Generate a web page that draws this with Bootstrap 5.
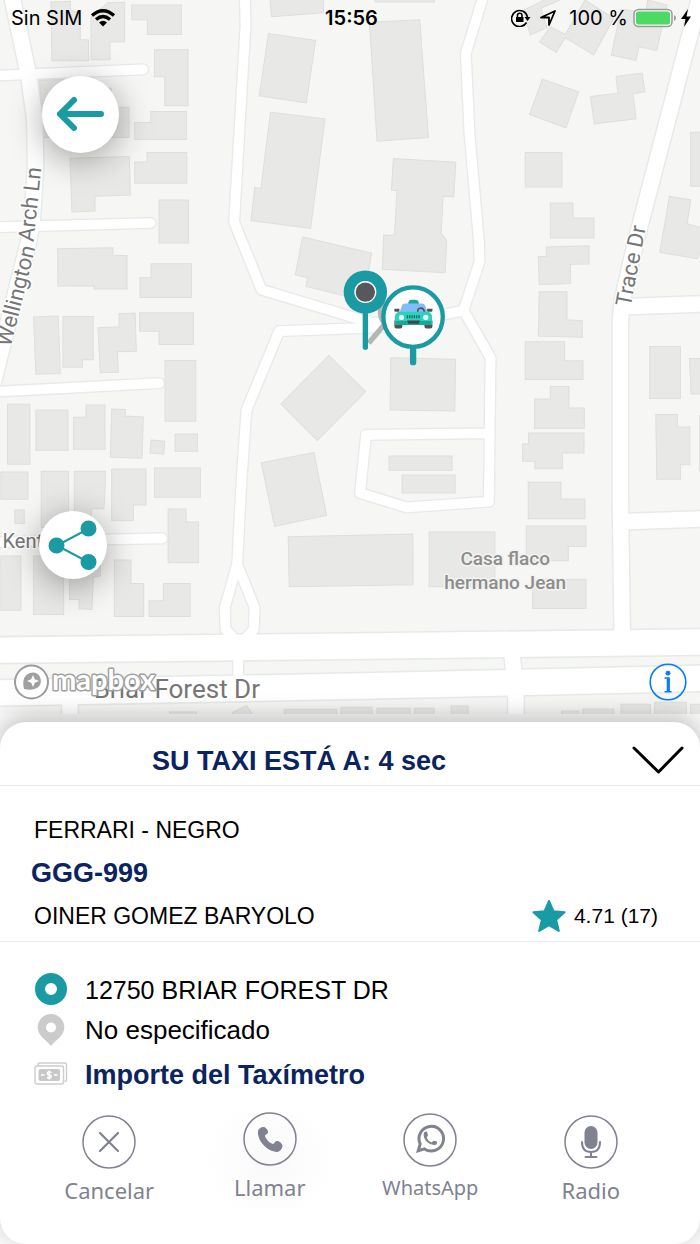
<!DOCTYPE html>
<html lang="es">
<head>
<meta charset="utf-8">
<meta name="viewport" content="width=device-width, initial-scale=1">
<title>Su taxi</title>
<link href="https://cdn.jsdelivr.net/npm/bootstrap@5.3.0/dist/css/bootstrap.min.css" rel="stylesheet">
<script src="https://cdn.jsdelivr.net/npm/bootstrap@5.3.0/dist/js/bootstrap.bundle.min.js" defer></script>
<style>
  :root { --teal: #1a9ba3; --navy: #0b245e; --slate: #808290; }
  body { font-family: "Liberation Sans", Arial, sans-serif; color: #000; background: #fafafa; }
  button { font: inherit; }

  /* Map */
  .map-area { background: #f6f6f4; min-height: 480px; }
  .map-canvas { position: absolute; inset: 0; }
  .map-canvas text { font-family: Roboto, sans-serif; fill: #767676; stroke: #fff; stroke-width: 3px; paint-order: stroke; stroke-linejoin: round; }
  .map-canvas .place { fill: #8d8d8d; stroke: #f3f3f1; font-weight: 500; font-size: 19px; text-anchor: middle; }
  .street { font-size: 22px; }
  .avenue { font-size: 26px; }
  .buildings { fill: #e8e8e6; stroke: #dededc; stroke-width: 3; }
  .roads { fill: none; stroke-linecap: round; stroke-linejoin: round; }
  .casing { stroke: #e6ebe9; }
  .surface { stroke: #fff; }

  .status-bar { font-family: Inter, sans-serif; font-size: 20px; line-height: 24px; padding: 6px 8px 6px 11px; }
  .status-bar > * { flex: 1 1 0; }
  .clock { font-weight: 600; }

  .round-btn { position: absolute; border: 0; padding: 0; border-radius: 50%; background: #fff; box-shadow: 0 6px 34px rgba(0,0,0,.36); }
  .back-btn { left: 42px; top: 76px; width: 77px; height: 77px; }
  .share-btn { left: 39px; bottom: 135px; width: 68px; height: 68px; }
  .map-logo { position: absolute; left: 13px; bottom: 10px; }
  .info-btn { position: absolute; right: 13px; bottom: 13px; border: 0; padding: 0; background: none; }

  /* Trip sheet */
  .sheet { margin-top: 8px; border-radius: 26px; background: #fff; box-shadow: 0 -6px 22px rgba(0,0,0,.22); padding-bottom: 36px; }
  .sheet-head { height: 64px; padding: 14px 16px 0; border-bottom: 1px solid #ececec; }
  .sheet-title { font-size: 27px; line-height: 50px; font-weight: 700; color: var(--navy); margin-right: 50px; }
  .toggle-btn { border: 0; background: none; padding: 0; width: 52px; }
  .accent { color: var(--navy); font-weight: 700; }
  .driver { padding: 23px 42px 4px 34px; border-bottom: 1px solid #ececec; font-size: 23px; line-height: 42px; }
  .plate { font-size: 27px; line-height: 44px; margin-left: -3px; }
  .rating { font-size: 21px; }
  .trip { padding: 28px 34px 0; font-size: 26px; line-height: 40px; }
  .trip li { gap: 17px; }
  .trip svg { flex: none; }
  .address { font-size: 25px; }
  .fare { font-size: 27px; line-height: 50px; }
  .actions { padding: 12px 29px 0; }
  .action { border: 0; background: none; padding: 0; color: var(--slate); font-family: "Noto Sans", sans-serif; font-size: 22px; line-height: 30px; }
  .action svg { display: block; margin: 0 auto 6px; }
  .action-sm { font-size: 20px; }
  .raised { padding-bottom: 5px; }
  .glow { background: radial-gradient(circle, #f9f9fa 0, #fff 70%); }
</style>
</head>
<body>
<div class="d-flex flex-column min-vh-100">

  <main class="map-area position-relative flex-grow-1">
    <svg class="map-canvas w-100 h-100" viewBox="0 0 700 713" preserveAspectRatio="xMidYMax slice" role="img" aria-label="Mapa">
      <defs>
        <g id="lanes">
          <path d="M-20 227L430 208M-20 681L452 668M-20 1174L478 1148M-20 1626L120 1620L487 1613"/>
          <path d="M735-20L737 75L703 665L785 868L1110 966L1200 970L1390 930"/>
          <path d="M1452-20L1397 160L1408 400L1436 720L1438 785L1390 930L1471 1072L1466 1503L1220 1520L1080 1477L1098 1303L1468 1298"/>
          <path d="M1160 980L838 992L740 1228L725 1440L712 1690L675 1820L677 1885L710 1920M712 1690L764 1820L762 1885L730 1920M715 1940V2060"/>
        </g>
        <g id="streets">
          <path d="M35-20L88 230L106 360L108 500L98 660L88 720L-20 1150"/>
          <path d="M2101-20L1907 720L1866 900L1860 960V1500L1866 1930M1866 919L2120 910M1862 1563L2120 1554"/>
          <path d="M1533 1940L1545 2050M211 2080V2180M1547 2070V2180"/>
        </g>
        <g id="avenues"><path d="M-20 1948L1050 1936L2120 1923M-20 2076L1050 2056L2120 2032"/></g>
      </defs>
      <g transform="scale(.33333)">
        <g class="buildings">
          <path d="M154 6L212 4V30L242 40V118L267 120V182H157ZM274 50L325 8L375 7V125L331 126V179H274ZM396 15H545V103H443V59H396ZM464 149H565V317H495V230H464ZM453 334H560V418H405V367H453ZM442 457H561V549H405V485H442ZM478 599H566V728H478ZM211 474L389 469L392 584L286 588V632L217 635ZM120 240L200 238L335 265V321H388V412H130ZM806 100L947 121L919 308L778 287ZM812 336L975 356L932 684L753 661L765 562L783 564ZM810-10H970V38L815 50Z"/>
          <g transform="translate(1050)">
            <path d="M75-10H253V6H75ZM58 67L209 59L235 412L81 423ZM130 475L317 486L311 590L279 588L273 700L290 720L285 817L97 807L101 704L133 705L141 571L124 570ZM576 237L685 275L647 383L538 343ZM797 229L875 219L884 275L848 281L857 356L732 371L720 289L803 279ZM525 457H635V560H525ZM600 608H668V653H731V713H600ZM520 30L567 8L590-5H640L572 25L590 82L540 105ZM600 80L645 103L704 0L790 55L730 165L645 113L618 157L568 126ZM812 28L885 38L892 0L950 15L919 151L866 140L857 181L783 165ZM1020 396H1080V558H1020ZM957 588L1021 599L1010 670L1080 690L1040 775L928 756Z"/>
          </g>
          <g transform="translate(0 720)">
            <path d="M174 25L340 22V44L382 46V146H283V136L175 137ZM454 70H575V171H421V112H454ZM102 230L176 227L182 399L109 401ZM190 228H281V358H248V380H190ZM295 262L358 259V220L406 218L410 332L353 334L356 395L302 397ZM420 217H581V312H478V272H420ZM496 360H588V542H496ZM24 491H91V671H24ZM109 508H205V629H109ZM222 530H259V493H316V626H222ZM336 505L377 507V526L431 529L427 653L332 650ZM454 598L495 602L492 641L451 637ZM526 580H593V632H526ZM908-10L1115 38L1090 180L918 138L923 112L886 103ZM987 345L1097 453L952 600L843 490ZM784 666L942 636L980 824L824 857ZM4 694H85V776H4ZM125 692H207V860H125ZM224 692H317V735L313 804H275V860H224ZM336 685H439V793H401V840H336ZM464 682H602V770H464Z"/>
          </g>
          <g transform="translate(1050 720)">
            <path d="M588 20L716 16V71L660 72V129L567 132L564 49L588 48ZM567 154H650V238L696 241V290L564 287ZM525 304H643V361H698V417H525ZM553 475H600V438H656V502H702V563H553ZM535 577H701V637H636V684H554V662H517V610H535ZM122 352L316 356L314 511L120 508ZM117 646H306V689H117ZM156 703H315V757H156ZM898 318H990V474H898ZM1017 354H1080V460H1022ZM916 522H981V559H1018V672H990V716H919ZM1048 525H1080V692H1048Z"/>
          </g>
          <g transform="translate(0 1440)">
            <path d="M46 88H74V128H46ZM505 85H559V124H596V246H505ZM4 226H64V388H4ZM102 226H192V401H102ZM210 240H302V285L281 290L277 386L238 384V356H210ZM344 238H394V308H432V407H344ZM491 308H571V407H448V360H491ZM865 168L1238 160L1239 312L868 318Z"/>
          </g>
          <g transform="translate(1050 1440)">
            <path d="M534 5H632V55H704V114H534ZM528 136H707V197H654V240H528ZM547 295H707V383H547ZM237 154H434V318H237Z"/>
          </g>
        </g>
        <g class="roads">
          <g class="casing"><use href="#lanes" stroke-width="37"/><use href="#streets" stroke-width="55"/><use href="#avenues" stroke-width="86"/></g>
          <g class="surface"><use href="#lanes" stroke-width="29"/><use href="#streets" stroke-width="46"/><use href="#avenues" stroke-width="76"/></g>
        </g>
        <path class="buildings" d="M510 2133H590V2150H510ZM697 2135L740 2113L765 2150H700ZM853 2125H1010V2150H853ZM1023 2119H1116V2150H1023ZM1131 2122H1230V2150H1131ZM1243 2122H1302V2150H1243ZM1353 2115H1404V2150H1353ZM1684 2130H1736V2150H1684ZM1747 2124H1840V2150H1747ZM1862 2110H1950V2150H1862ZM1963 2104H2058V2150H1963ZM2070 2110H2120V2150H2070Z"/>
      </g>
      <text class="street" transform="translate(11 347) rotate(-76)">Wellington</text>
      <text class="street" transform="translate(34 242) rotate(-84)">Arch Ln</text>
      <text class="street" transform="translate(630 307) rotate(-79)">Trace Dr</text>
      <text x="3" y="547" font-size="20">Kent</text>
      <text class="avenue" x="94" y="697">Briar Forest Dr</text>
      <text class="place" x="505" y="564">Casa flaco</text>
      <text class="place" x="505" y="588">hermano Jean</text>

      <!-- pickup pin and taxi pin -->
      <g transform="translate(330 260) scale(.33333)">
        <path d="M116 248L165 190Q140 160 162 120" fill="none" stroke="#b5b5b5" stroke-width="16"/>
        <path d="M106 140V260" stroke="#1a9ba3" stroke-width="16" stroke-linecap="round"/>
        <circle cx="106" cy="95" r="65" fill="#1a9ba3"/>
        <circle cx="106" cy="95" r="31" fill="#58585c" stroke="#fff" stroke-width="4"/>
        <path d="M249 250V305" stroke="#1a9ba3" stroke-width="19" stroke-linecap="round"/>
        <circle cx="249" cy="170" r="89" fill="#fff" stroke="#1a9ba3" stroke-width="13"/>
        <path d="M234 131Q235 118 244 118H256Q265 118 267 131Z" fill="#18a999"/>
        <path d="M193 180H217V198Q217 204 211 204H199Q193 204 193 198ZM283 180H307V198Q307 204 301 204H289Q283 204 283 198ZM193 145H208V154H196Q193 154 193 151ZM291 145H307V151Q307 154 304 154H291Z" fill="#525257"/>
        <path d="M208 156L217 133Q219 129 226 129H276Q282 129 284 134L293 156Z" fill="#82bdfa"/>
        <path d="M206 154H294Q306 157 306 171V187Q306 194 298 194H202Q194 194 194 187V171Q195 157 206 154Z" fill="#2bd1bd"/>
        <path d="M196 182H304V188Q304 194 298 194H202Q196 194 196 188Z" fill="#16a898"/>
        <path d="M263 154V149Q265 143 272 143Q281 143 283 154" fill="none" stroke="#525257" stroke-width="5"/>
        <path d="M230 169H272" stroke="#0e6f69" stroke-width="9" stroke-dasharray="4 3"/>
        <path d="M231 180H270L266 190H235Z" fill="#444449"/>
        <circle cx="214" cy="171" r="8" fill="#e5fbf6"/><circle cx="287" cy="171" r="8" fill="#e5fbf6"/>
      </g>
    </svg>

    <header class="status-bar position-relative d-flex align-items-center">
      <div class="d-flex align-items-center gap-2">
        <span>Sin SIM</span>
        <svg width="26" height="18" viewBox="0 0 24 18" fill="none" stroke="#000" stroke-width="3.200" aria-label="Wi-Fi"><path d="M1 6.500Q12-3 23 6.500M5 10.500Q12 4.500 19 10.500"/><path d="M8 13.500Q12 10 16 13.500L12 17.500Z" fill="#000" stroke="none"/></svg>
      </div>
      <div class="clock text-center">15:56</div>
      <div class="d-flex align-items-center justify-content-end">
        <svg width="20" height="18" viewBox="0 0 20 18" fill="none" stroke="#000" stroke-width="1.600" aria-hidden="true"><path d="M15.500 13.500A8 8 0 1 1 16.400 8"/><path d="M13.500 8H19.500L16.500 12Z" fill="#000" stroke="none"/><path d="M5 8H12.500V13H5Z" fill="#000" stroke="none"/><path d="M6.500 8V6.200Q6.500 4.200 8.700 4.200T11 6.200V8"/></svg>
        <svg class="mx-2" width="18" height="18" viewBox="0 0 18 18" fill="none" stroke="#000" stroke-width="1.800" stroke-linejoin="round" aria-hidden="true"><path d="M16 2L10 16V8.500H2Z"/></svg>
        <span class="ms-1 text-nowrap">100 %</span>
        <svg class="ms-1" width="60" height="20" viewBox="0 0 60 20" aria-label="Batería"><rect x="2" y="1.500" width="38" height="17" rx="4.500" fill="#f6f6f4" stroke="#9a9a9a" stroke-width="1.500"/><rect x="4" y="3.500" width="34" height="13" rx="2.500" fill="#4cd964"/><path d="M42 7V13Q44 12 44 10T42 7Z" fill="#9a9a9a"/><path d="M56 1L49 11H53.500L52 19L59 8.500H54.500Z"/></svg>
      </div>
    </header>

    <button type="button" class="round-btn back-btn" aria-label="Volver">
      <svg class="d-block" width="77" height="77" viewBox="0 0 77 77" fill="none" stroke="#1a9ba3" stroke-width="6" stroke-linecap="round" stroke-linejoin="round"><path d="M59 38H18M32 24L18 38L32 52"/></svg>
    </button>
    <button type="button" class="round-btn share-btn" aria-label="Compartir">
      <svg class="d-block" width="68" height="68" viewBox="0 0 68 68" fill="#1a9ba3" stroke="#1a9ba3" stroke-width="2"><path d="M50 17.500L18 34.500L50 51.500" fill="none"/><circle cx="49.500" cy="17.500" r="7"/><circle cx="17.500" cy="34.500" r="7"/><circle cx="49.500" cy="51" r="7"/></svg>
    </button>
    <a href="#" class="map-logo" aria-label="mapbox">
      <svg class="d-block" width="150" height="44" viewBox="0 0 150 44"><circle cx="18.500" cy="22" r="16.500" fill="#fff" stroke="#9c9c9c" stroke-width="2"/><path d="M11 29Q8 16 17 13Q24 11 27 17Q30 24 24 28Q19 31 11 29Z" fill="#a0a0a0"/><path d="M20 15L21.800 19.200L26 21L21.800 22.800L20 27L18.200 22.800L14 21L18.200 19.200Z" fill="#fff"/><text x="39" y="30" font-family="Lato, sans-serif" font-size="29" font-weight="700" fill="#fff" stroke="#a0a0a0" stroke-width="3" stroke-linejoin="round" paint-order="stroke">mapbox</text></svg>
    </a>
    <button type="button" class="info-btn" aria-label="Información">
      <svg class="d-block" width="38" height="38" viewBox="0 0 38 38" fill="none" stroke="#087cff" stroke-width="1.600"><circle cx="19" cy="19" r="17.800"/><path d="M15.500 15H20V28.500M15.500 28.800H22.500" stroke-width="1.400"/><path d="M19.200 15V28.500" stroke-width="3"/><circle cx="19" cy="10.200" r="2.400" fill="#087cff" stroke="none"/></svg>
    </button>
  </main>

  <section class="sheet position-relative">
    <div class="sheet-head d-flex">
      <h1 class="sheet-title flex-grow-1 text-center mb-0">SU TAXI ESTÁ A: 4 sec</h1>
      <button type="button" class="toggle-btn" aria-label="Ocultar detalles"><svg class="d-block" width="52" height="30" viewBox="0 0 52 30" fill="none" stroke="#000" stroke-width="3" stroke-linecap="round" stroke-linejoin="round"><path d="M2 2L26.500 26L50 2"/></svg></button>
    </div>

    <div class="driver">
      <div>FERRARI - NEGRO</div>
      <div class="plate accent">GGG-999</div>
      <div class="d-flex justify-content-between align-items-center">
        <span>OINER GOMEZ BARYOLO</span>
        <span class="rating d-flex align-items-center gap-2">
          <svg width="34" height="34" viewBox="0 0 34 34" fill="#1a9ba3" stroke="#1a9ba3" stroke-width="2" stroke-linejoin="round" aria-hidden="true"><path d="M17 2L21.400 12.200L32.600 13.300L24.200 20.700L26.800 32L17 26.200L7.200 32L9.800 20.700L1.400 13.300L12.600 12.200Z"/></svg>
          4.71 (17)
        </span>
      </div>
    </div>

    <ul class="trip list-unstyled mb-0">
      <li class="address d-flex align-items-center"><svg width="34" height="34" viewBox="0 0 34 34"><circle cx="17" cy="16" r="11" fill="none" stroke="#1a9ba3" stroke-width="10"/></svg><span>12750 BRIAR FOREST DR</span></li>
      <li class="d-flex align-items-center"><svg width="34" height="34" viewBox="0 0 34 34"><path fill="#cbcbcb" fill-rule="evenodd" d="M17 1A13.300 13.300 0 0 0 3.700 14.300C3.700 23 12 26.500 17 33C22 26.500 30.300 23 30.300 14.300A13.300 13.300 0 0 0 17 1ZM17 9.500A5 5 0 1 1 17 19.500A5 5 0 0 1 17 9.500Z"/></svg><span>No especificado</span></li>
      <li class="fare accent d-flex align-items-center"><svg width="34" height="26" viewBox="0 0 34 26" fill="none" stroke="#cdcdcd" stroke-width="1.400"><path d="M4 4V2.500Q4 1 6 1H30.500Q32.500 1 32.500 3V17.500Q32.500 19.500 30.500 19.500"/><rect x="1" y="4" width="28.500" height="18" rx="2"/><rect x="4.500" y="7" width="21.500" height="12" rx="2" fill="#c8c8c8" stroke="none"/><path d="M7 13H10.500M20 13H23.500" stroke="#fff"/><path d="M17.500 10.800Q15 9 13.500 10.800Q13 12.500 15.200 13Q18 13.700 17 15.500Q15.500 17 13 15.300M15.200 8.500V17.500" stroke="#fff" stroke-width="1.500"/></svg><span>Importe del Taxímetro</span></li>
    </ul>

    <div class="actions row g-0 align-items-center text-center">
      <div class="col-3"><button type="button" class="action">
        <svg width="54" height="54" viewBox="0 0 54 54" fill="none" stroke="currentColor" stroke-width="1.500"><circle cx="27" cy="27" r="26"/><path d="M18 18L36 36M36 18L18 36" stroke-width="2.200" stroke-linecap="round"/></svg>Cancelar</button></div>
      <div class="col-3 raised glow"><button type="button" class="action">
        <svg width="54" height="54" viewBox="0 0 54 54" fill="none" stroke="currentColor" stroke-width="1.500"><circle cx="27" cy="27" r="26"/><path fill="currentColor" stroke="none" d="M15 19C15.500 16.500 18.500 14.500 21 15C23 15.500 25.500 18.500 25 20.500C24.500 22.500 22 22.500 22 24C23 27.500 26.500 31 30 32C31.500 32 31.500 29.500 33.500 29C36 28.500 39 31.500 39.500 33.500C39.500 36.500 37 39.500 34 40C24.500 39.500 14 29 15 19Z"/></svg>Llamar</button></div>
      <div class="col-3 raised"><button type="button" class="action action-sm">
        <svg width="54" height="54" viewBox="0 0 54 54" fill="none" stroke="currentColor" stroke-width="1.500"><circle cx="27" cy="27" r="26"/><path d="M15.200 37.800L17.200 31A12.300 12.300 0 1 1 21.500 35.900Z" stroke-width="3"/><path fill="currentColor" stroke="none" d="M21 19.500Q23.500 17.500 24.500 20L25 22.500Q23.500 24 23.800 25Q25.500 28.500 28.500 29.500L30.500 27.800L34 28.500Q34.500 31.500 32 32Q28 32.500 24 29Q19.500 24.500 21 19.500Z"/></svg>WhatsApp</button></div>
      <div class="col-3"><button type="button" class="action">
        <svg width="54" height="54" viewBox="0 0 54 54" fill="none" stroke="currentColor" stroke-width="1.500"><circle cx="27" cy="27" r="26"/><rect x="20.500" y="11" width="13" height="23" rx="6.500" fill="currentColor" stroke="none"/><path d="M18 27Q18 37 27 37T36 27M27 37V42M21.500 42H32.500" stroke-width="2" stroke-linecap="round"/></svg>Radio</button></div>
    </div>
  </section>
</div>
</body>
</html>
